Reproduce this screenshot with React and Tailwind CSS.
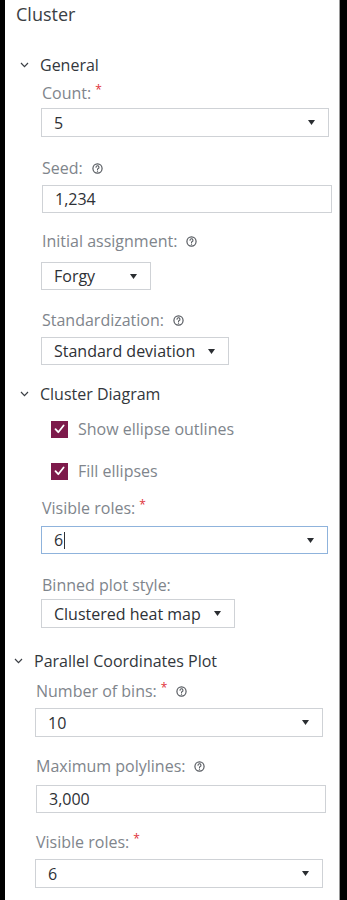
import React from 'react';

const Help = () => (
    <svg width="11" height="11" viewBox="0 0 12 12" className="ml-[9px] shrink-0">
        <circle cx="6" cy="6" r="5" fill="none" stroke="#55595f" strokeWidth="1.3" />
        <path d="M4.4 4.7a1.6 1.6 0 1 1 2.3 1.4c-.5.3-.7.5-.7 1.1" fill="none" stroke="#55595f" strokeWidth="1.2" strokeLinecap="round" />
        <circle cx="6" cy="8.9" r="0.7" fill="#55595f" />
    </svg>
);

const Chevron = () => (
    <svg width="9" height="6" viewBox="0 0 9 6" className="shrink-0">
        <path d="M1 1l3.5 3.6L8 1" fill="none" stroke="#3b3f45" strokeWidth="1.2" />
    </svg>
);

const Arrow = () => (
    <svg width="7" height="5" viewBox="0 0 7 5" className="shrink-0">
        <path d="M0 0h7L3.5 5z" fill="#2a2d31" />
    </svg>
);

const Label = ({ text, required, help, className = '' }) => (
    <div className={`flex items-center h-5 leading-5 text-[16px] text-[#80858c] ${className}`}>
        <span>{text}</span>
        {required && <span className="text-[#e0313b] ml-[4px] text-[12px] leading-none -mt-[6px]">*</span>}
        {help && <Help />}
    </div>
);

const Select = ({ value, className = '', focused, caret }) => (
    <div
        className={`flex items-center justify-between pl-[12px] pr-[13px] border bg-white text-[16px] text-[#2e3136] ${
            focused ? 'border-[#8fb3dc] border-[1.5px]' : 'border-[#cfd2d6]'
        } ${className}`}
    >
        <span className="flex items-center">
            {value}
            {caret && <span className="inline-block w-px h-[17px] bg-[#2e3136] ml-[1px]" />}
        </span>
        <Arrow />
    </div>
);

const Input = ({ value, className = '' }) => (
    <div className={`flex items-center pl-[12px] border border-[#cfd2d6] bg-white text-[16px] text-[#2e3136] ${className}`}>
        {value}
    </div>
);

const Section = ({ title, className = '' }) => (
    <div className={`flex items-center h-5 leading-5 text-[16px] text-[#33373c] ${className}`}>
        <Chevron />
        <span className="ml-[11px]">{title}</span>
    </div>
);

const Check = ({ label, className = '' }) => (
    <div className={`flex items-center h-5 ml-[46px] ${className}`}>
        <div className="w-[17px] h-[17px] bg-[#7d1a4b] flex items-center justify-center">
            <svg width="11" height="10" viewBox="0 0 11 10">
                <path d="M1.5 5.2l2.8 3L9.6 1.5" fill="none" stroke="#fff" strokeWidth="1.8" strokeLinecap="round" strokeLinejoin="round" />
            </svg>
        </div>
        <span className="ml-[10px] text-[16px] leading-5 text-[#80858c]">{label}</span>
    </div>
);

const App = () => {
    return (
        <div className="w-[347px] h-[900px] bg-black flex" style={{ fontFamily: '"Open Sans", "Noto Sans", sans-serif' }}>
            <div className="ml-[5px] w-[335px] h-full bg-white border-r border-[#9a9a9a] flex flex-col overflow-hidden">
                <div className="mt-[4px] ml-[11px] h-5 leading-5 flex items-center text-[18px] text-[#3a3e44]">Cluster</div>

                <Section title="General" className="mt-[31px] ml-[15px]" />
                <Label text="Count:" required className="mt-[8px] ml-[37px]" />
                <Select value="5" className="mt-[5px] ml-[36px] w-[288px] h-[29px]" />
                <Label text="Seed:" help className="mt-[21px] ml-[37px]" />
                <Input value="1,234" className="mt-[7px] ml-[37px] w-[290px] h-[28px]" />
                <Label text="Initial assignment:" help className="mt-[18px] ml-[37px]" />
                <Select value="Forgy" className="mt-[11px] ml-[36px] w-[110px] h-[28px]" />
                <Label text="Standardization:" help className="mt-[20px] ml-[37px]" />
                <Select value="Standard deviation" className="mt-[7px] ml-[36px] w-[188px] h-[28px]" />

                <Section title="Cluster Diagram" className="mt-[19px] ml-[15px]" />
                <Check label="Show ellipse outlines" className="mt-[15px]" />
                <Check label="Fill ellipses" className="mt-[22px]" />
                <Label text="Visible roles:" required className="mt-[17px] ml-[37px]" />
                <Select value="6" caret focused className="mt-[8px] ml-[36px] w-[287px] h-[28px]" />
                <Label text="Binned plot style:" className="mt-[21px] ml-[37px]" />
                <Select value="Clustered heat map" className="mt-[4px] ml-[36px] w-[194px] h-[29px]" />

                <Section title="Parallel Coordinates Plot" className="mt-[23px] ml-[9px]" />
                <Label text="Number of bins:" required help className="mt-[10px] ml-[31px]" />
                <Select value="10" className="mt-[7px] ml-[30px] w-[288px] h-[29px]" />
                <Label text="Maximum polylines:" help className="mt-[19px] ml-[31px]" />
                <Input value="3,000" className="mt-[9px] ml-[31px] w-[290px] h-[28px]" />
                <Label text="Visible roles:" required className="mt-[19px] ml-[31px]" />
                <Select value="6" className="mt-[7px] ml-[30px] w-[288px] h-[29px]" />
            </div>
        </div>
    );
};

export default App;
